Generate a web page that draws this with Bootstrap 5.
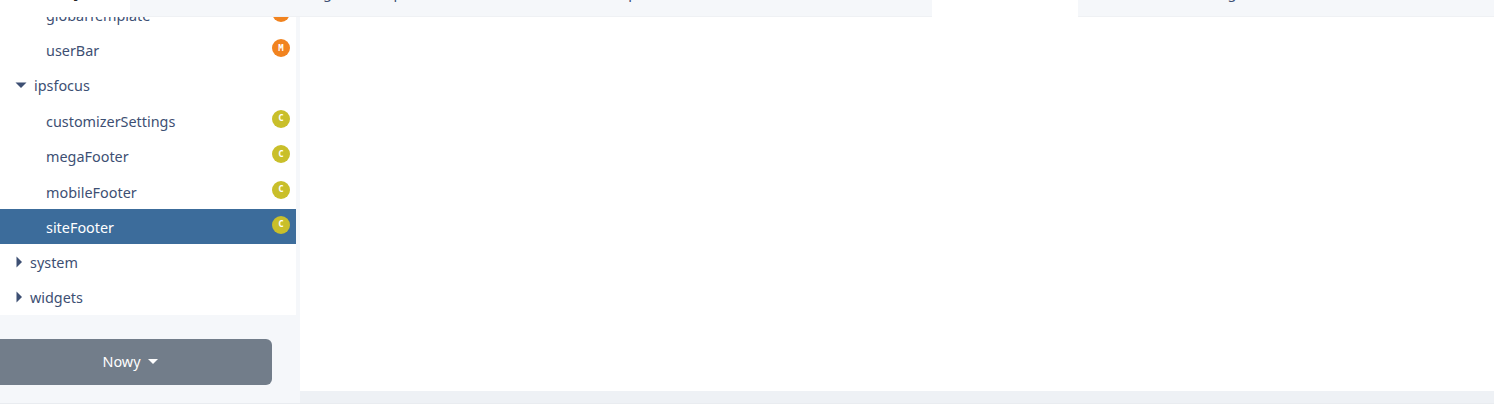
<!DOCTYPE html>
<html lang="pl">
<head>
<meta charset="utf-8">
<title>Theme editor</title>
<link href="https://cdn.jsdelivr.net/npm/bootstrap@5.3.0/dist/css/bootstrap.min.css" rel="stylesheet">
<style>
html,body{margin:0;height:412px;overflow:hidden;background:#fff}
body{font-family:"Noto Sans","Open Sans",sans-serif;font-size:14.4px;color:#3d4f73}
.shell{height:404px;overflow:hidden;background:#f5f7fa;border-bottom:1px solid #e9ecf0;position:relative}
.side{width:300px;flex:none;background:#f5f7fa}
.tree{width:296px;background:#fff;margin-top:-38px}
.tree-row{height:35.33px;padding-right:6px}
.tree-row.lvl1{padding-left:46px}
.tree-row.sel{background:#3c6c9b;color:#fff}
.lbl{padding-top:2px}
.chip{width:18px;height:18px;border-radius:50%;color:#fff;font-size:9px;font-weight:700;font-family:"DejaVu Sans Mono",monospace;margin-bottom:3px}
.chip-m{background:#f1831f}
.chip-c{background:#c9bf2a}
.tw{width:16px;flex:none;margin-left:14px}
.head-gap{height:35px}
.new-wrap{height:88px;padding:24px 28px 0 0}
.new-btn{height:46px;margin-left:-12px;background:#727d8a;color:#fff;border-radius:6px;gap:7px}
.caret{width:0;height:0;border-left:5.5px solid transparent;border-right:5.5px solid transparent;border-top:5.5px solid #fff}
.main-pane{background:#fff}
.main-foot{height:12px;background:#eef1f5}
.tabbar{position:absolute;top:0;left:0;right:0;height:17px;overflow:hidden;white-space:nowrap}
.tab-item{height:17px;flex:none;overflow:hidden;background:#f5f7fa;border-bottom:1px solid #eff1f4;line-height:20px}
.tab-item span{display:block;margin-top:-17px}
.tab-first{width:130px;background:#fff;border-bottom:0}
.tab-first span{font-weight:700;font-size:16px;color:#222;padding-left:12px;margin-top:-19px}
.tab-a{width:157px}
.tab-b{width:179px;padding-left:36px}
.tab-c{width:304px;padding-left:31px}
.tab-d{width:162px;padding-left:36px}
.tab-on{width:146px;background:#fff;border-bottom:0;padding-left:38px}
.tab-e{flex:1 1 auto;padding-left:36px}
</style>
</head>
<body>
<div class="shell d-flex">
  <aside class="side">
    <div class="tree">
      <div class="head-gap"></div>
      <div class="tree-row lvl1 d-flex align-items-center justify-content-between"><span class="lbl">globalTemplate</span><span class="chip chip-m d-flex align-items-center justify-content-center">M</span></div>
      <div class="tree-row lvl1 d-flex align-items-center justify-content-between"><span class="lbl">userBar</span><span class="chip chip-m d-flex align-items-center justify-content-center">M</span></div>
      <div class="tree-row d-flex align-items-center"><svg class="tw" width="16" height="8" viewBox="0 0 16 8"><path d="M1.5 1.5h11L7 7z" fill="#3d4f73"/></svg><span class="ms-1">ipsfocus</span></div>
      <div class="tree-row lvl1 d-flex align-items-center justify-content-between"><span class="lbl">customizerSettings</span><span class="chip chip-c d-flex align-items-center justify-content-center">C</span></div>
      <div class="tree-row lvl1 d-flex align-items-center justify-content-between"><span class="lbl">megaFooter</span><span class="chip chip-c d-flex align-items-center justify-content-center">C</span></div>
      <div class="tree-row lvl1 d-flex align-items-center justify-content-between"><span class="lbl">mobileFooter</span><span class="chip chip-c d-flex align-items-center justify-content-center">C</span></div>
      <div class="tree-row lvl1 sel d-flex align-items-center justify-content-between"><span class="lbl">siteFooter</span><span class="chip chip-c d-flex align-items-center justify-content-center">C</span></div>
      <div class="tree-row d-flex align-items-center"><svg class="tw" width="16" height="12" viewBox="0 0 16 12"><path d="M2.5.5v11L8 6z" fill="#3d4f73"/></svg><span class="lbl">system</span></div>
      <div class="tree-row d-flex align-items-center"><svg class="tw" width="16" height="12" viewBox="0 0 16 12"><path d="M2.5.5v11L8 6z" fill="#3d4f73"/></svg><span class="lbl">widgets</span></div>
    </div>
    <div class="new-wrap">
      <div class="new-btn d-flex align-items-center justify-content-center"><span>Nowy</span><span class="caret"></span></div>
    </div>
  </aside>
  <main class="main-pane flex-grow-1 d-flex flex-column">
    <div class="main-foot mt-auto"></div>
  </main>
  <div class="tabbar d-flex">
    <div class="tab-item tab-first"><span>Szablony</span></div>
    <div class="tab-item tab-a"><span>footerLinks</span></div>
    <div class="tab-item tab-b"><span>globalTemplate</span></div>
    <div class="tab-item tab-c"><span>customizerTheme_ipsfocus_footer</span></div>
    <div class="tab-item tab-d"><span>siteHeader</span></div>
    <div class="tab-item tab-on"><span>siteFooter</span></div>
    <div class="tab-item tab-e"><span>customizerSettings</span></div>
  </div>
</div>
</body>
</html>
